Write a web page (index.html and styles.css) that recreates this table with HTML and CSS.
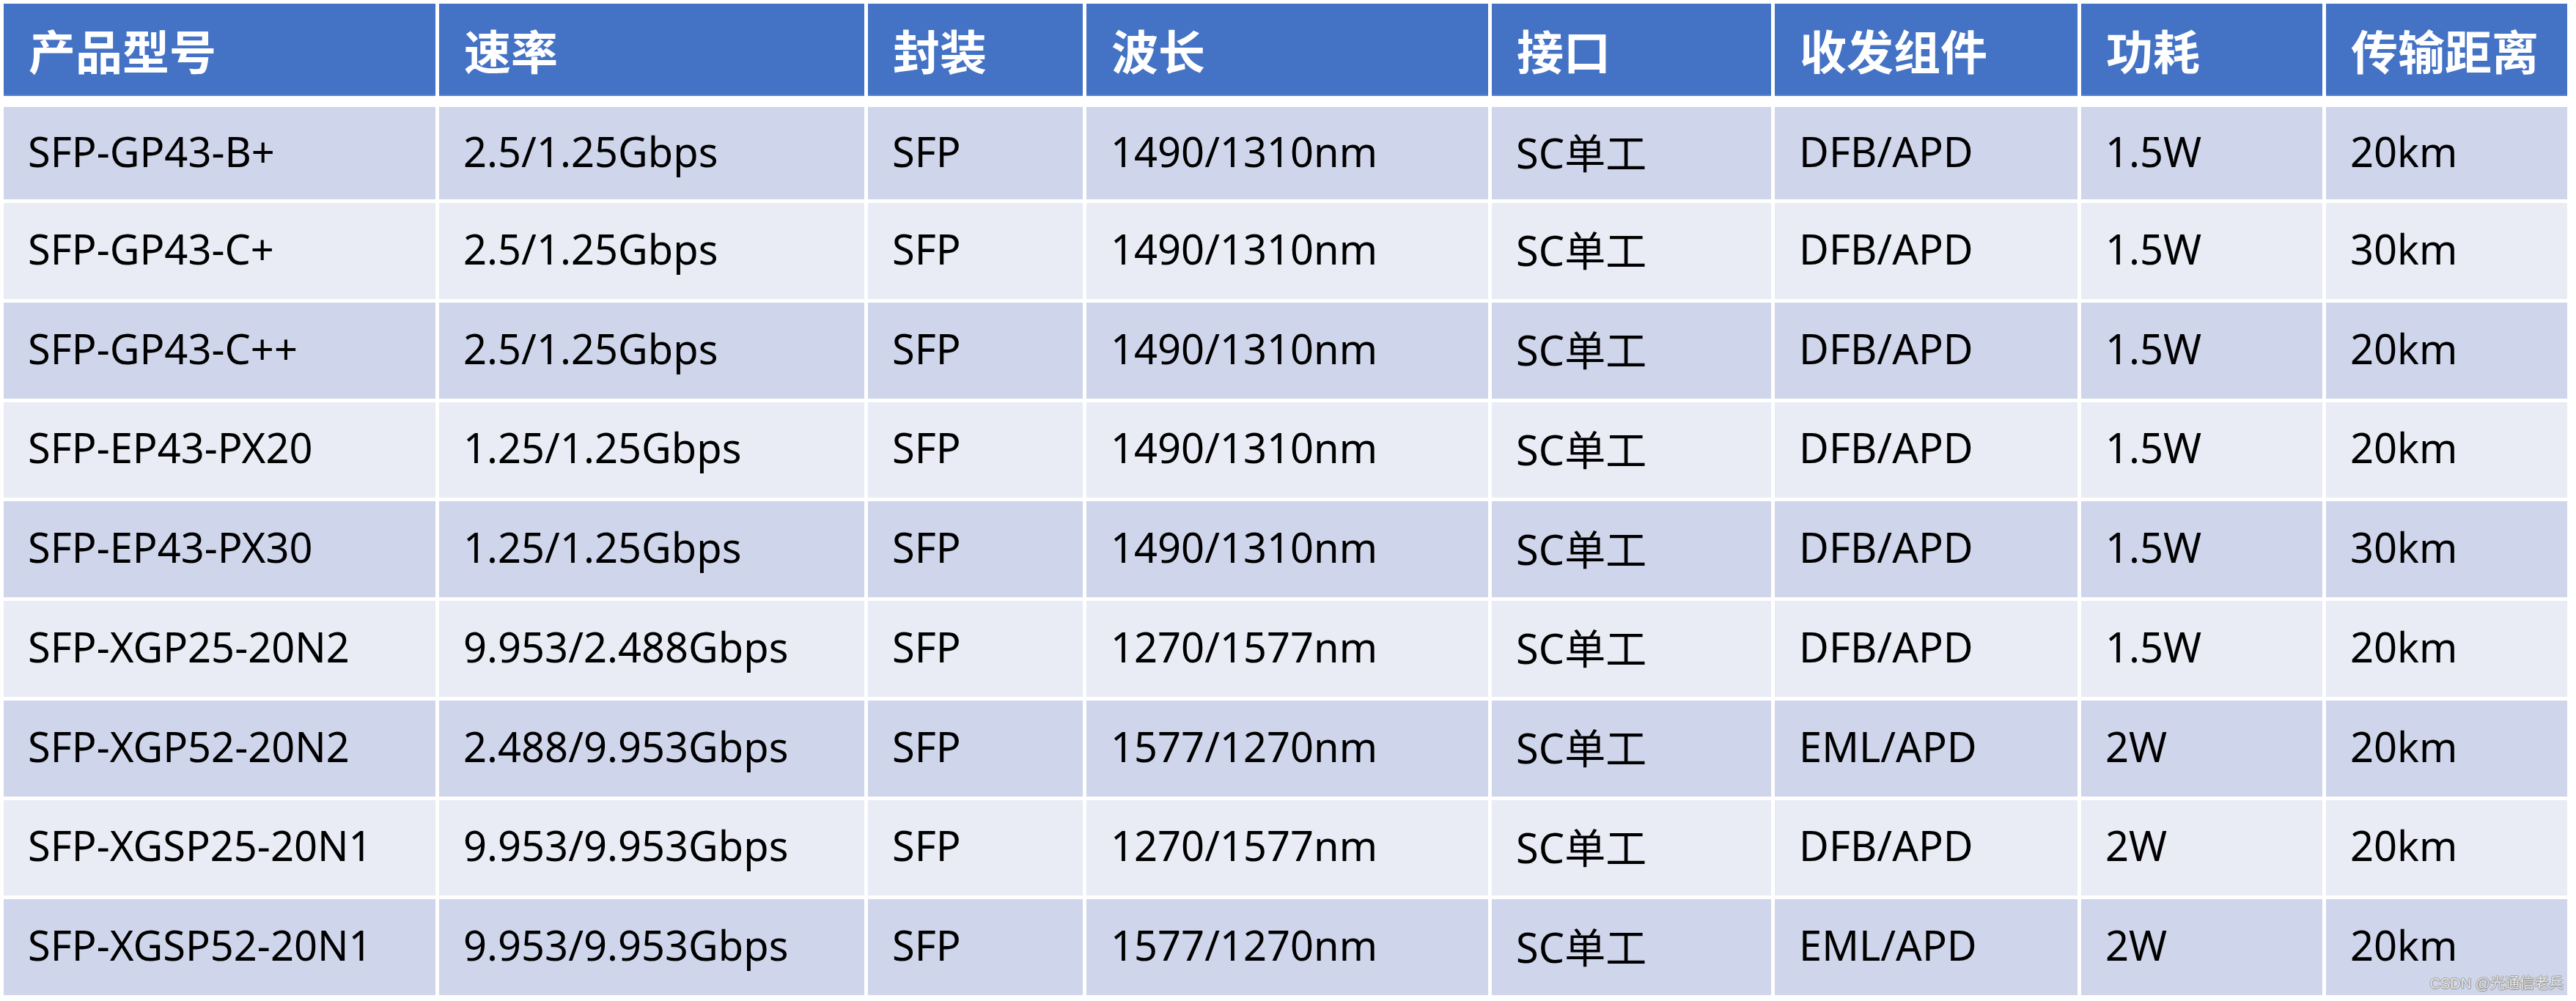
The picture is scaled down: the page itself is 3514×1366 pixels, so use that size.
FILE: index.html
```html
<!DOCTYPE html>
<html lang="zh-CN">
<head>
<meta charset="utf-8">
<title>光模块参数表</title>
<link rel="stylesheet" href="styles.css">
</head>
<body>
<div class="page">
  <div class="table">
    <div class="row head">
      <div class="cell">产品型号</div><div class="cell">速率</div><div class="cell">封装</div><div class="cell">波长</div><div class="cell">接口</div><div class="cell">收发组件</div><div class="cell">功耗</div><div class="cell">传输距离</div>
    </div>
    <div class="row odd first">
      <div class="cell">SFP-GP43-B+</div><div class="cell">2.5/1.25Gbps</div><div class="cell">SFP</div><div class="cell">1490/1310nm</div><div class="cell">SC单工</div><div class="cell">DFB/APD</div><div class="cell">1.5W</div><div class="cell">20km</div>
    </div>
    <div class="row even">
      <div class="cell">SFP-GP43-C+</div><div class="cell">2.5/1.25Gbps</div><div class="cell">SFP</div><div class="cell">1490/1310nm</div><div class="cell">SC单工</div><div class="cell">DFB/APD</div><div class="cell">1.5W</div><div class="cell">30km</div>
    </div>
    <div class="row odd">
      <div class="cell">SFP-GP43-C++</div><div class="cell">2.5/1.25Gbps</div><div class="cell">SFP</div><div class="cell">1490/1310nm</div><div class="cell">SC单工</div><div class="cell">DFB/APD</div><div class="cell">1.5W</div><div class="cell">20km</div>
    </div>
    <div class="row even">
      <div class="cell">SFP-EP43-PX20</div><div class="cell">1.25/1.25Gbps</div><div class="cell">SFP</div><div class="cell">1490/1310nm</div><div class="cell">SC单工</div><div class="cell">DFB/APD</div><div class="cell">1.5W</div><div class="cell">20km</div>
    </div>
    <div class="row odd">
      <div class="cell">SFP-EP43-PX30</div><div class="cell">1.25/1.25Gbps</div><div class="cell">SFP</div><div class="cell">1490/1310nm</div><div class="cell">SC单工</div><div class="cell">DFB/APD</div><div class="cell">1.5W</div><div class="cell">30km</div>
    </div>
    <div class="row even">
      <div class="cell">SFP-XGP25-20N2</div><div class="cell">9.953/2.488Gbps</div><div class="cell">SFP</div><div class="cell">1270/1577nm</div><div class="cell">SC单工</div><div class="cell">DFB/APD</div><div class="cell">1.5W</div><div class="cell">20km</div>
    </div>
    <div class="row odd">
      <div class="cell">SFP-XGP52-20N2</div><div class="cell">2.488/9.953Gbps</div><div class="cell">SFP</div><div class="cell">1577/1270nm</div><div class="cell">SC单工</div><div class="cell">EML/APD</div><div class="cell">2W</div><div class="cell">20km</div>
    </div>
    <div class="row even">
      <div class="cell">SFP-XGSP25-20N1</div><div class="cell">9.953/9.953Gbps</div><div class="cell">SFP</div><div class="cell">1270/1577nm</div><div class="cell">SC单工</div><div class="cell">DFB/APD</div><div class="cell">2W</div><div class="cell">20km</div>
    </div>
    <div class="row odd">
      <div class="cell">SFP-XGSP52-20N1</div><div class="cell">9.953/9.953Gbps</div><div class="cell">SFP</div><div class="cell">1577/1270nm</div><div class="cell">SC单工</div><div class="cell">EML/APD</div><div class="cell">2W</div><div class="cell">20km</div>
    </div>
    <div class="watermark">CSDN @光通信老兵</div>
  </div>
</div>
</body>
</html>
```
FILE: styles.css
```css
html, body {
  margin: 0;
  padding: 0;
  background: #ffffff;
}

.page {
  padding: 5px 0 0 5px;
  width: 3514px;
  height: 1366px;
  box-sizing: border-box;
}

.table {
  position: relative;
  width: 3497px;
  display: flex;
  flex-direction: column;
  gap: 5px;
  font-family: "Noto Sans", "Noto Sans CJK SC", sans-serif;
}

.row {
  display: grid;
  grid-template-columns: 589px 580px 293px 548px 381px 413px 329px 329px;
  column-gap: 5px;
  height: 130.75px;
}

.row.head {
  height: 126px;
  margin-bottom: 10px;
}

.row.first {
  height: 126px;
}

.cell {
  display: flex;
  align-items: center;
  box-sizing: border-box;
  padding-left: 33px;
  padding-bottom: 7px;
  font-size: 56px;
  color: #000000;
  white-space: nowrap;
  overflow: hidden;
}

.head .cell {
  background: #4472c4;
  color: #ffffff;
  font-family: "Noto Sans CJK SC", "Noto Sans", sans-serif;
  font-weight: 700;
  font-size: 64px;
  padding-left: 34px;
  padding-bottom: 2px;
  box-shadow: inset 0 -2px 0 #5b84cc;
}

.odd .cell {
  background: #cfd5ea;
}

.even .cell {
  background: #e9ebf5;
}

.watermark {
  position: absolute;
  right: 5px;
  bottom: 3px;
  font-family: "Liberation Sans", "Noto Sans CJK SC", sans-serif;
  font-size: 20px;
  color: #e6e6e6;
  text-shadow: 1px 0 0 #8c8c8c, -1px 0 0 #a0a0a0, 0 1px 0 #8c8c8c, 0 -1px 0 #a8a8a8;
}
```
